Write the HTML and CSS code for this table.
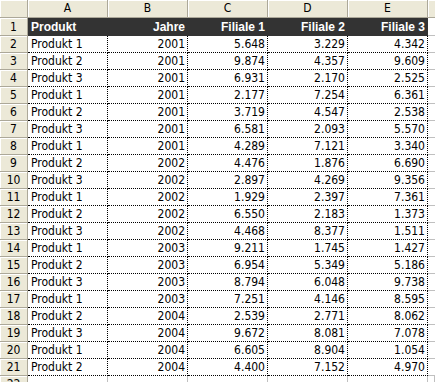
FILE: index.html
```html
<!DOCTYPE html>
<html>
<head>
<meta charset="utf-8">
<link rel="stylesheet" href="styles.css">
</head>
<body>
<div class="sheet">
  <div class="ch corner"></div>
  <div class="ch">A</div><div class="ch">B</div><div class="ch">C</div><div class="ch">D</div><div class="ch">E</div><div class="ch chf"></div>

  <div class="rh">1</div>
  <div class="c hd">Produkt</div><div class="c hd num">Jahre</div><div class="c hd num">Filiale 1</div><div class="c hd num">Filiale 2</div><div class="c hd num">Filiale 3</div><div class="c f"></div>

  <div class="rh">2</div><div class="c">Produkt 1</div><div class="c num">2001</div><div class="c num">5.648</div><div class="c num">3.229</div><div class="c num">4.342</div><div class="c f"></div>
  <div class="rh">3</div><div class="c">Produkt 2</div><div class="c num">2001</div><div class="c num">9.874</div><div class="c num">4.357</div><div class="c num">9.609</div><div class="c f"></div>
  <div class="rh">4</div><div class="c">Produkt 3</div><div class="c num">2001</div><div class="c num">6.931</div><div class="c num">2.170</div><div class="c num">2.525</div><div class="c f"></div>
  <div class="rh">5</div><div class="c">Produkt 1</div><div class="c num">2001</div><div class="c num">2.177</div><div class="c num">7.254</div><div class="c num">6.361</div><div class="c f"></div>
  <div class="rh">6</div><div class="c">Produkt 2</div><div class="c num">2001</div><div class="c num">3.719</div><div class="c num">4.547</div><div class="c num">2.538</div><div class="c f"></div>
  <div class="rh">7</div><div class="c">Produkt 3</div><div class="c num">2001</div><div class="c num">6.581</div><div class="c num">2.093</div><div class="c num">5.570</div><div class="c f"></div>
  <div class="rh">8</div><div class="c">Produkt 1</div><div class="c num">2001</div><div class="c num">4.289</div><div class="c num">7.121</div><div class="c num">3.340</div><div class="c f"></div>
  <div class="rh">9</div><div class="c">Produkt 2</div><div class="c num">2002</div><div class="c num">4.476</div><div class="c num">1.876</div><div class="c num">6.690</div><div class="c f"></div>
  <div class="rh">10</div><div class="c">Produkt 3</div><div class="c num">2002</div><div class="c num">2.897</div><div class="c num">4.269</div><div class="c num">9.356</div><div class="c f"></div>
  <div class="rh">11</div><div class="c">Produkt 1</div><div class="c num">2002</div><div class="c num">1.929</div><div class="c num">2.397</div><div class="c num">7.361</div><div class="c f"></div>
  <div class="rh">12</div><div class="c">Produkt 2</div><div class="c num">2002</div><div class="c num">6.550</div><div class="c num">2.183</div><div class="c num">1.373</div><div class="c f"></div>
  <div class="rh">13</div><div class="c">Produkt 3</div><div class="c num">2002</div><div class="c num">4.468</div><div class="c num">8.377</div><div class="c num">1.511</div><div class="c f"></div>
  <div class="rh">14</div><div class="c">Produkt 1</div><div class="c num">2003</div><div class="c num">9.211</div><div class="c num">1.745</div><div class="c num">1.427</div><div class="c f"></div>
  <div class="rh">15</div><div class="c">Produkt 2</div><div class="c num">2003</div><div class="c num">6.954</div><div class="c num">5.349</div><div class="c num">5.186</div><div class="c f"></div>
  <div class="rh">16</div><div class="c">Produkt 3</div><div class="c num">2003</div><div class="c num">8.794</div><div class="c num">6.048</div><div class="c num">9.738</div><div class="c f"></div>
  <div class="rh">17</div><div class="c">Produkt 1</div><div class="c num">2003</div><div class="c num">7.251</div><div class="c num">4.146</div><div class="c num">8.595</div><div class="c f"></div>
  <div class="rh">18</div><div class="c">Produkt 2</div><div class="c num">2004</div><div class="c num">2.539</div><div class="c num">2.771</div><div class="c num">8.062</div><div class="c f"></div>
  <div class="rh">19</div><div class="c">Produkt 3</div><div class="c num">2004</div><div class="c num">9.672</div><div class="c num">8.081</div><div class="c num">7.078</div><div class="c f"></div>
  <div class="rh">20</div><div class="c">Produkt 1</div><div class="c num">2004</div><div class="c num">6.605</div><div class="c num">8.904</div><div class="c num">1.054</div><div class="c f"></div>
  <div class="rh">21</div><div class="c">Produkt 2</div><div class="c num">2004</div><div class="c num">4.400</div><div class="c num">7.152</div><div class="c num">4.970</div><div class="c f"></div>

  <div class="rh">22</div><div class="c e"></div><div class="c e"></div><div class="c e"></div><div class="c e"></div><div class="c e"></div><div class="c f e"></div>
</div>
</body>
</html>
```

FILE: styles.css
```css
html, body {
  margin: 0;
  padding: 0;
  background: #ffffff;
  overflow: hidden;
}

.sheet {
  display: grid;
  grid-template-columns: 28px 80px 80px 80px 80px 80px 1fr;
  grid-template-rows: 18px 18px repeat(20, 17px) 17px;
  width: 435px;
  font-family: "DejaVu Sans Condensed", "DejaVu Sans", sans-serif;
  font-size: 12px;
  color: #000;
}

.sheet > div {
  box-sizing: border-box;
  white-space: nowrap;
  overflow: hidden;
}

.ch {
  background: #ece9d8;
  border-right: 1px solid #aca899;
  border-bottom: 1px solid #aca899;
  box-shadow: inset 1px 1px 0 #ffffff;
  text-align: center;
  line-height: 17px;
}

.chf {
  border-right: none;
}

.rh {
  background: #ece9d8;
  border-right: 1px solid #aca899;
  border-bottom: 1px solid #aca899;
  box-shadow: inset 1px 1px 0 #ffffff;
  display: flex;
  align-items: flex-end;
  justify-content: center;
  padding-bottom: 1px;
}

.c {
  border-right: 1px dotted #000;
  border-bottom: 1px dotted #000;
  padding: 0 2px 1px 3px;
  display: flex;
  align-items: flex-end;
}

.num {
  justify-content: flex-end;
}

.hd {
  background: #333333;
  color: #ffffff;
  font-family: "Liberation Sans", Arial, sans-serif;
  font-weight: bold;
  font-size: 12px;
  border-right-color: #333333;
  border-bottom: 1px solid #333333;
}

.f {
  border-right: none;
  border-bottom: 1px solid #c0c0c0;
}

.e {
  border-right: 1px solid #c0c0c0;
  border-bottom: none;
}
```
